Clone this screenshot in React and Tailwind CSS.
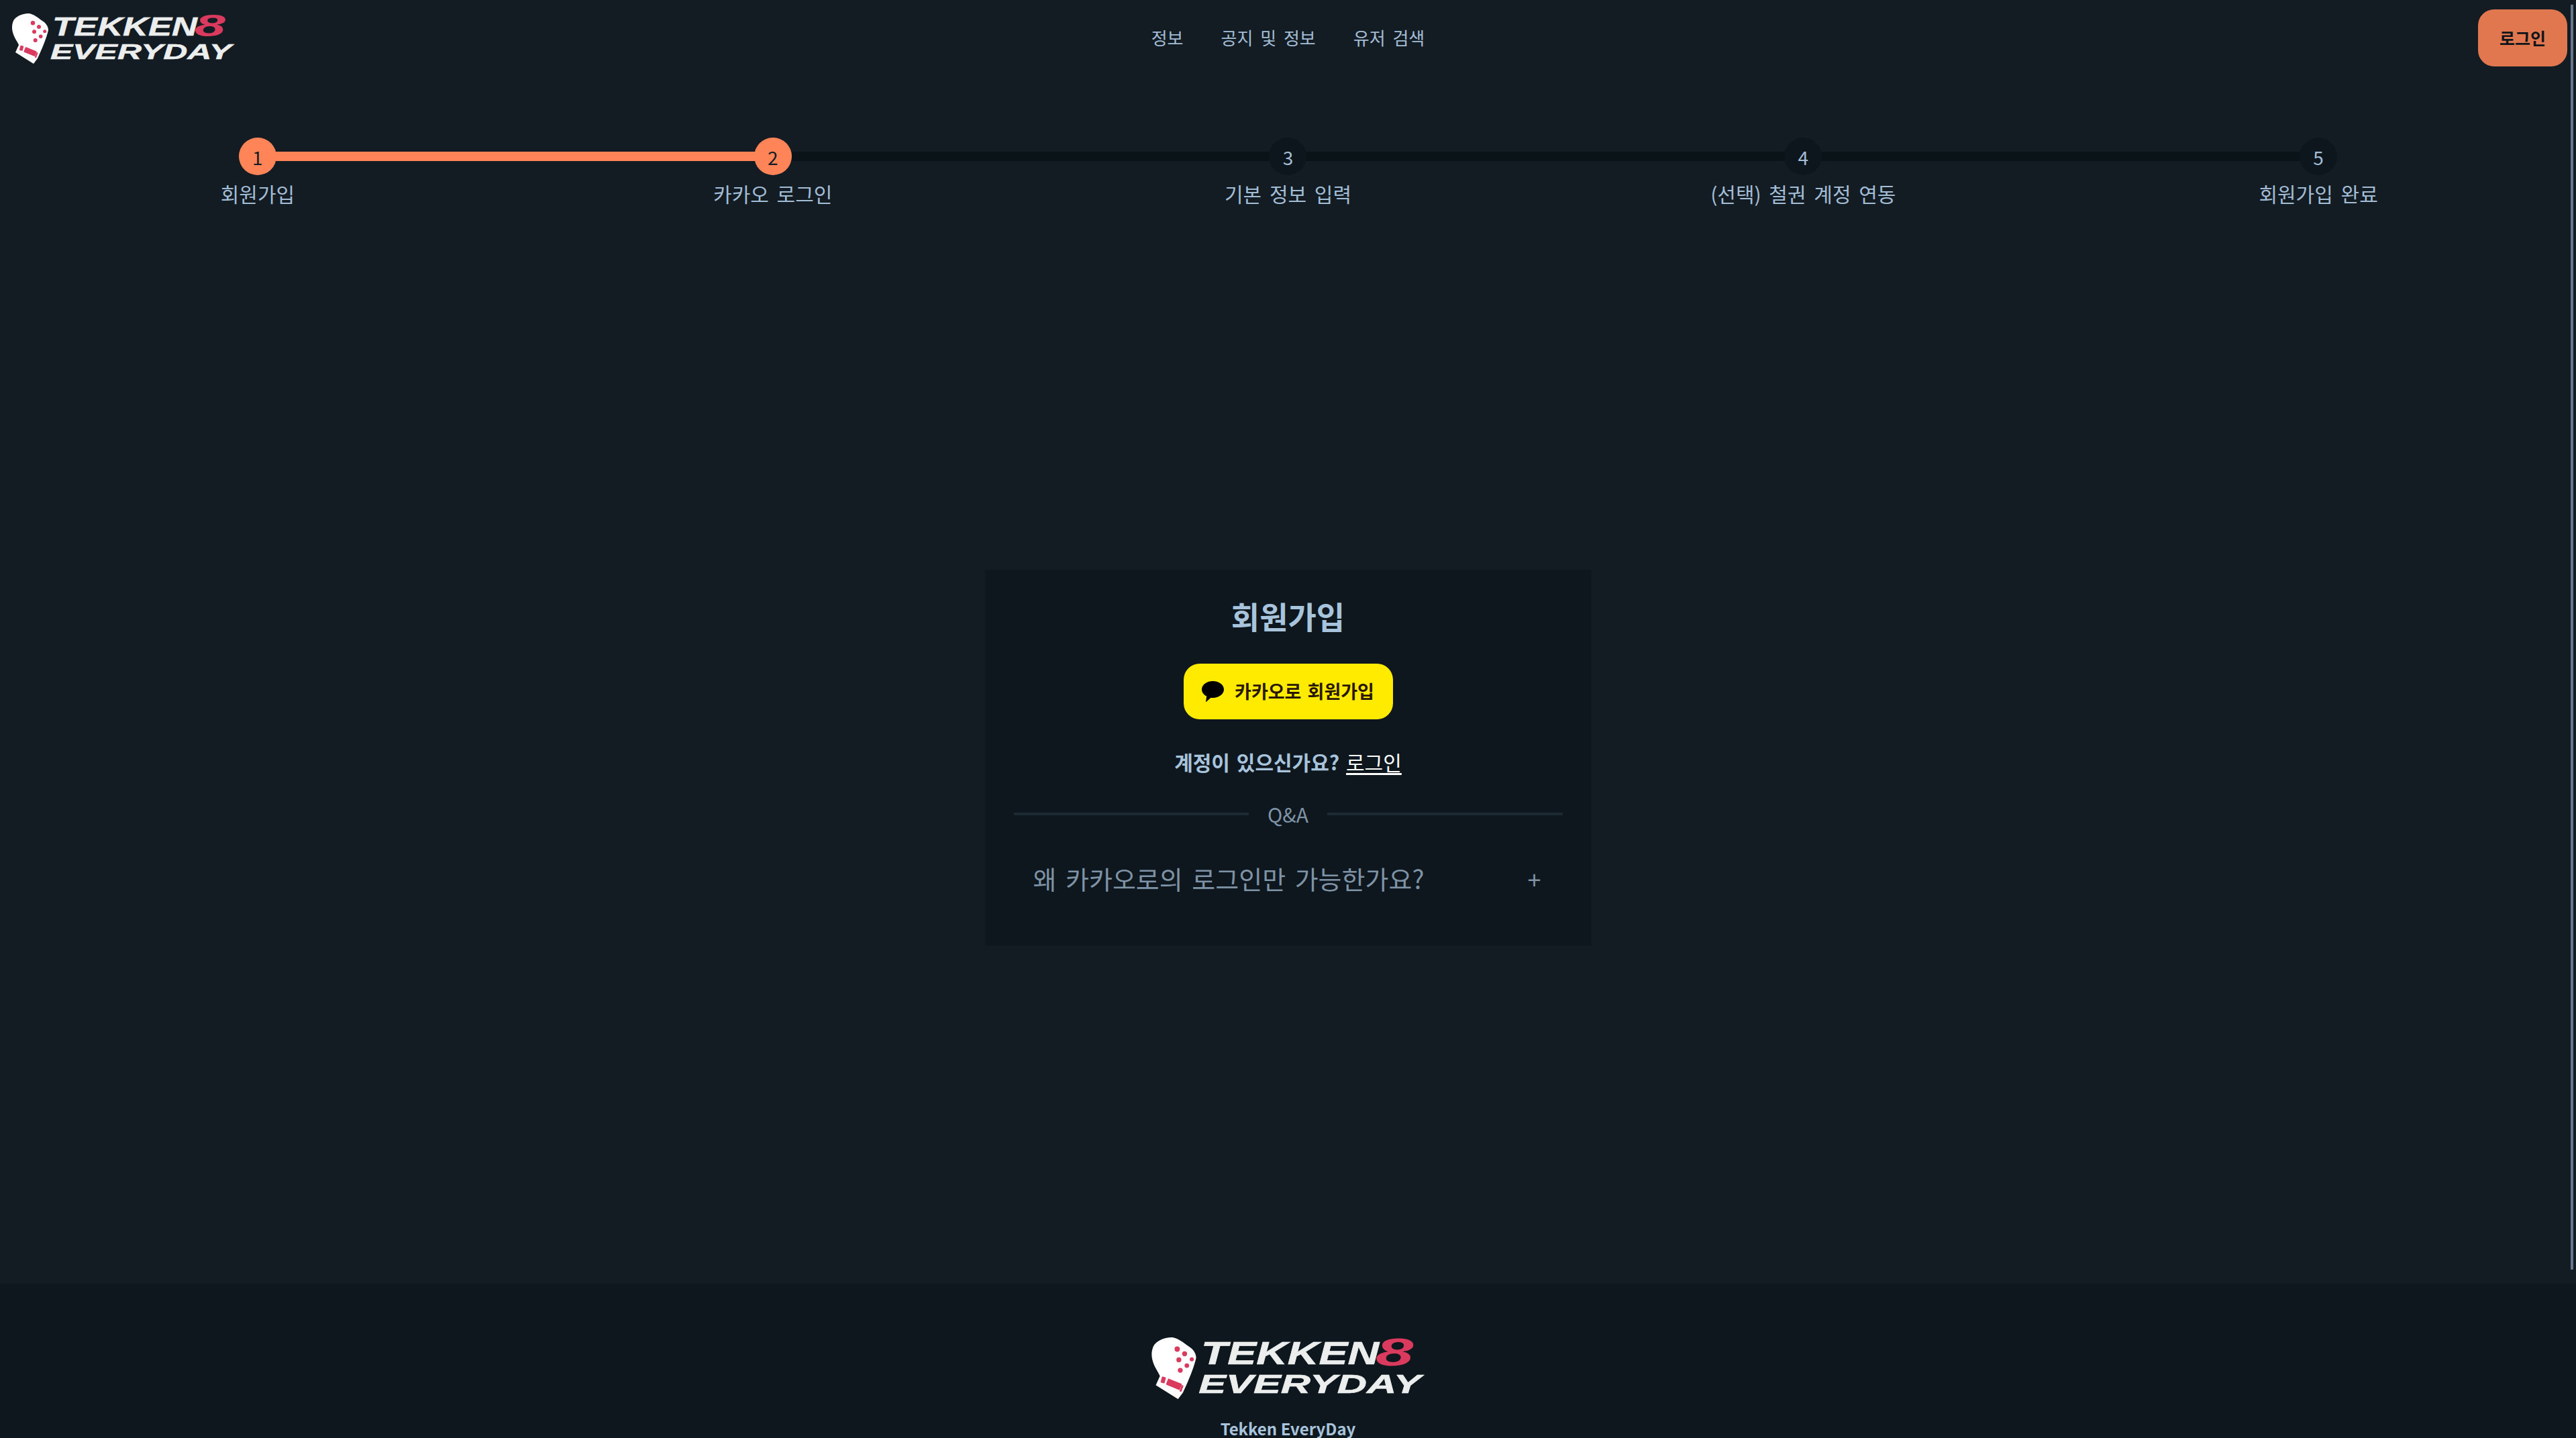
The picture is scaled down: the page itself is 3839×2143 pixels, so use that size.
function Logo({ className }) {
  return (
    <svg viewBox="0 0 332 75" overflow="visible" className={className}>
      <path d="M25 0 C14 0 5 5 2 11 C-1 18 0 24 1 28 C3 36 8 42 10 47 L5 58 L32 75 L38 67 C44 54 51 38 54 25 C54 19 50 14 45 11 C38 6 32 1 25 0 Z" fill="#ffffff" />
      <g fill="#d93a5e">
        <circle cx="31" cy="14.3" r="3.2" />
        <circle cx="40" cy="20" r="3" />
        <circle cx="48.7" cy="26.7" r="2.5" />
        <circle cx="33" cy="27.3" r="3" />
        <circle cx="42.7" cy="34.3" r="2.8" />
        <circle cx="34.7" cy="40" r="3" />
        <rect x="11.5" y="48" width="5" height="7.5" rx="1" transform="rotate(15 14 52)" />
        <rect x="18" y="53" width="18" height="8" rx="1" transform="rotate(22 27 57)" />
        <rect x="35" y="58" width="2.4" height="8" transform="rotate(20 36 62)" />
      </g>
      <text x="60" y="33" fontFamily="'Liberation Sans', sans-serif" fontWeight="700" fontStyle="italic" fontSize="39" textLength="216" lengthAdjust="spacingAndGlyphs" fill="#eceeee" stroke="#eceeee" strokeWidth="0.5">TEKKEN</text>
      <text x="272" y="34" fontFamily="'Liberation Sans', sans-serif" fontWeight="700" fontStyle="italic" fontSize="47" textLength="46" lengthAdjust="spacingAndGlyphs" fill="#d93a5e">8</text>
      <text x="57" y="68" fontFamily="'Liberation Sans', sans-serif" fontWeight="700" fontStyle="italic" fontSize="32" textLength="270" lengthAdjust="spacingAndGlyphs" fill="#eceeee" stroke="#eceeee" strokeWidth="0.5">EVERYDAY</text>
    </svg>
  );
}

const steps = ["회원가입", "카카오 로그인", "기본 정보 입력", "(선택) 철권 계정 연동", "회원가입 완료"];

export default function App() {
  return (
    <div className="relative flex h-[2143px] flex-col overflow-hidden bg-[#141c23] font-['Noto_Sans_CJK_KR','Noto_Sans',sans-serif]">
      <header className="grid h-[113px] grid-cols-[1fr_auto_1fr] items-start">
        <div className="pl-[18px] pt-[20px]">
          <Logo className="h-[75px] w-[332px]" />
        </div>
        <nav className="flex gap-[56px] pt-[38px] text-[26px] leading-[36px] text-[#a3bdd6] [word-spacing:5px]">
          <a>정보</a>
          <a>공지 및 정보</a>
          <a>유저 검색</a>
        </nav>
        <div className="flex justify-end pr-[13px] pt-[14px]">
          <button className="h-[85px] w-[133px] rounded-[24px] bg-[#e0774f] text-[25px] font-bold text-[#0e1419]">로그인</button>
        </div>
      </header>

      <section className="grid grid-cols-5 pt-[92px]">
        {steps.map((label, i) => (
          <div key={label} className="relative flex flex-col items-center">
            {i < 4 && (
              <div className={`absolute left-1/2 top-[21px] h-[14px] w-full ${i === 0 ? "bg-[#ff8559]" : "bg-[#0a1318]"}`} />
            )}
            <div className={`relative flex h-[56px] w-[56px] items-center justify-center rounded-full pt-[2px] text-[28px] ${i < 2 ? "bg-[#ff8559] text-[#141c23]" : "bg-[#0d161c] text-[#a3bdd6]"}`}>
              {i + 1}
            </div>
            <div className="mt-[5px] text-[30px] leading-[44px] text-[#a3bdd6] [word-spacing:5px]">{label}</div>
          </div>
        ))}
      </section>

      <main className="flex flex-1 justify-center pt-[539px]">
        <div className="flex h-[560px] w-[904px] flex-col items-center bg-[#0e171d] px-[43px] pt-[36px]">
          <h1 className="text-[46px] font-bold leading-[64px] text-[#a8c3dc]">회원가입</h1>
          <button className="mt-[40px] flex h-[83px] w-[312px] items-center justify-center gap-[16px] rounded-[24px] bg-[#feeb00] text-[27px] font-bold text-[#2a1700] [word-spacing:3px]">
            <svg viewBox="0 0 33 32" className="h-[32px] w-[33px]">
              <path d="M16.5 0 C25.6 0 33 5.6 33 12.5 C33 19.4 25.6 25 16.5 25 C15.5 25 14.5 24.9 13.6 24.8 L6 31.5 L7.2 22.6 C2.8 20.4 0 16.7 0 12.5 C0 5.6 7.4 0 16.5 0 Z" fill="#000000" />
            </svg>
            카카오로 회원가입
          </button>
          <p className="mt-[41px] text-[30px] font-semibold leading-[44px] text-[#a8c3dc] [word-spacing:3px]">
            계정이 있으신가요? <a className="font-normal text-white underline underline-offset-4">로그인</a>
          </p>
          <div className="mt-[34px] flex w-full items-center gap-[28px]">
            <div className="h-[4px] flex-1 bg-[#1e2a32]" />
            <span className="text-[30px] leading-[44px] text-[#7f93a6]">Q&amp;A</span>
            <div className="h-[4px] flex-1 bg-[#1e2a32]" />
          </div>
          <div className="mt-[45px] flex w-full items-center justify-between pl-[29px] pr-[32px]">
            <span className="text-[38px] leading-[58px] text-[#7f93a6] [word-spacing:5px]">왜 카카오로의 로그인만 가능한가요?</span>
            <span className="text-[36px] leading-[44px] text-[#7f93a6]">+</span>
          </div>
        </div>
      </main>

      <footer className="flex h-[230px] shrink-0 flex-col items-center bg-[#0e171d] pt-[80px]">
        <Logo className="h-[92px] w-[408px] shrink-0" />
        <p className="mt-[30px] shrink-0 text-[24px] font-semibold leading-[28px] text-[#a8c3dc]">Tekken EveryDay</p>
      </footer>

      <div className="absolute right-[4px] top-[7px] h-[1885px] w-[4px] bg-[#66768c]" />
    </div>
  );
}
